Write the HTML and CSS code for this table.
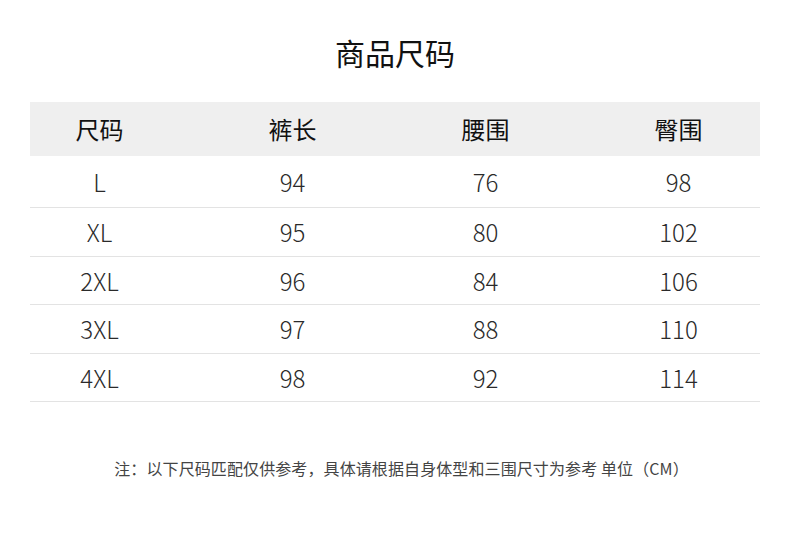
FILE: index.html
```html
<!DOCTYPE html>
<html lang="zh">
<head>
<meta charset="utf-8">
<link rel="stylesheet" href="styles.css">
</head>
<body>
<div class="page">
  <h1 class="title">商品尺码</h1>
  <div class="table">
    <div class="row head"><span>尺码</span><span>裤长</span><span>腰围</span><span>臀围</span></div>
    <div class="row first"><span>L</span><span>94</span><span>76</span><span>98</span></div>
    <div class="row"><span>XL</span><span>95</span><span>80</span><span>102</span></div>
    <div class="row short"><span>2XL</span><span>96</span><span>84</span><span>106</span></div>
    <div class="row"><span>3XL</span><span>97</span><span>88</span><span>110</span></div>
    <div class="row short"><span>4XL</span><span>98</span><span>92</span><span>114</span></div>
  </div>
  <p class="note">注：以下尺码匹配仅供参考，具体请根据自身体型和三围尺寸为参考 单位（CM）</p>
</div>
</body>
</html>
```
FILE: styles.css
```css
html, body {
  margin: 0;
  padding: 0;
  background: #fff;
}
body {
  width: 790px;
  height: 541px;
  overflow: hidden;
  font-family: "Noto Sans CJK SC", "Noto Sans", sans-serif;
  color: #222;
}
.page {
  padding: 30px 30px 0 30px;
}
.title {
  margin: 0;
  height: 72px;
  line-height: 44px;
  text-align: center;
  font-size: 30px;
  font-weight: 400;
  color: #111;
}
.table {
  display: flex;
  flex-direction: column;
}
.row {
  display: grid;
  grid-template-columns: repeat(4, 193px);
  justify-content: center;
  padding-right: 12px;
  height: 48px;
  border-bottom: 1px solid #e3e3e3;
  align-items: center;
  font-size: 24px;
  font-weight: 300;
  color: #2a2a2a;
}
.row span {
  text-align: center;
  line-height: 1;
}
.row.head {
  height: 54px;
  background: #efefef;
  border-bottom: none;
  font-weight: 400;
  color: #111;
}
.row.first {
  height: 51px;
}
.row.short {
  height: 47px;
}
.note {
  margin: 54px 0 0 0;
  padding-left: 13px;
  text-align: center;
  font-size: 16px;
  letter-spacing: 0.1px;
  color: #444;
  font-weight: 400;
}
```
